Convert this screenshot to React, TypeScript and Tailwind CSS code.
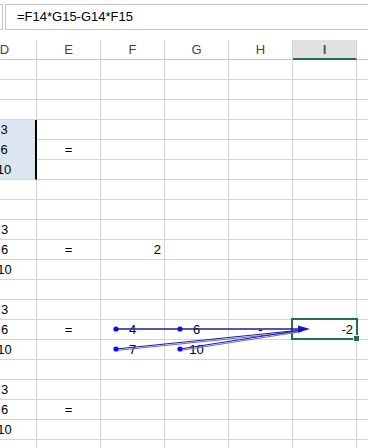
import React from 'react';

type Align = 'c' | 'r';
type Row = Partial<Record<string, [string, Align]>>;

const cols = ['D', 'E', 'F', 'G', 'H', 'I', 'J'];

const block = (extra: Row = {}, mid: Row = {}, low: Row = {}): Row[] => [
  { D: ['3', 'c'], ...extra },
  { D: ['6', 'c'], E: ['=', 'c'], ...mid },
  { D: ['10', 'c'], ...low },
];

const rows: Row[] = [
  {},
  {},
  {},
  ...block(),
  {},
  {},
  ...block({}, { F: ['2', 'r'] }),
  {},
  ...block(
    {},
    { F: ['4', 'c'], G: ['6', 'c'], H: ['-', 'c'], I: ['-2', 'r'] },
    { F: ['7', 'c'], G: ['10', 'c'] }
  ),
  {},
  ...block(),
  {},
];

function Cell({ row, col, data }: { row: number; col: string; data?: [string, Align] }) {
  const blue = col === 'D' && row >= 3 && row <= 5;
  const noBottom = col === 'D' && (row === 3 || row === 4);
  return (
    <div
      className={
        'w-[64px] h-[20px] shrink-0 box-border leading-[20px] text-[13px] text-black overflow-visible whitespace-nowrap ' +
        (blue ? 'bg-[#dce6f1] border-r-2 border-r-black ' : 'border-r border-r-[#d4d4d4] ') +
        (noBottom ? '' : 'border-b border-b-[#d4d4d4] ') +
        (data && data[1] === 'r' ? 'text-right pr-[3px]' : 'text-center')
      }
    >
      {data ? data[0] : ''}
    </div>
  );
}

export default function App() {
  return (
    <div
      className="relative w-[368px] h-[448px] overflow-hidden bg-white"
      style={{ fontFamily: '"Liberation Sans", Arial, sans-serif' }}
    >
      {/* formula bar */}
      <div className="flex pt-[4px] h-[40px]">
        <div className="w-[3px] h-[26px] box-border border-t border-r border-b border-[#c6c6c6]" />
        <div className="ml-[2px] flex-1 h-[26px] box-border border-t border-l border-b border-[#c6c6c6] pl-[11px] text-[13px] leading-[24px] text-black">
          =F14*G15-G14*F15
        </div>
      </div>

      <div className="-ml-[27px]">
        {/* column headers */}
        <div className="flex">
          {cols.map((c) => (
            <div
              key={c}
              className={
                'w-[64px] h-[20px] shrink-0 box-border border-r border-r-[#d4d4d4] text-center text-[13px] leading-[19px] ' +
                (c === 'I'
                  ? 'bg-[#e1e1e1] border-b-2 border-b-[#217346] text-[#217346] font-bold'
                  : 'border-b border-b-[#c6c6c6] text-[#444]')
              }
            >
              {c}
            </div>
          ))}
        </div>

        {/* grid */}
        {rows.map((r, i) => (
          <div key={i} className="flex">
            {cols.map((c) => (
              <Cell key={c} row={i} col={c} data={r[c]} />
            ))}
          </div>
        ))}
      </div>

      {/* active cell I15 */}
      <div className="absolute left-[291px] top-[318px] w-[67px] h-[22px] border-2 border-[#217346]">
        <div className="absolute -right-[4px] -bottom-[4px] w-[7px] h-[7px] bg-[#217346] border border-white" />
      </div>

      {/* trace precedents arrows */}
      <svg className="absolute left-0 top-0 pointer-events-none" width="368" height="448">
        <line x1="116" y1="329" x2="302" y2="329" stroke="#1c1c9a" strokeWidth="1.3" />
        <line x1="116" y1="349" x2="302" y2="330" stroke="#1c1c9a" strokeWidth="1.2" />
        <line x1="116" y1="350.5" x2="302" y2="331.5" stroke="#6a6ad8" strokeWidth="1" />
        <line x1="180" y1="349" x2="302" y2="330" stroke="#1c1c9a" strokeWidth="1.2" />
        <line x1="180" y1="350.5" x2="302" y2="331.5" stroke="#6a6ad8" strokeWidth="1" />
        <polygon points="298,325.5 310,329 298,332.5" fill="#1414c8" />
        <circle cx="116" cy="329" r="2.6" fill="#0a0aff" />
        <circle cx="180" cy="329" r="2.6" fill="#0a0aff" />
        <circle cx="116" cy="349" r="2.6" fill="#0a0aff" />
        <circle cx="180" cy="349" r="2.6" fill="#0a0aff" />
      </svg>
    </div>
  );
}
